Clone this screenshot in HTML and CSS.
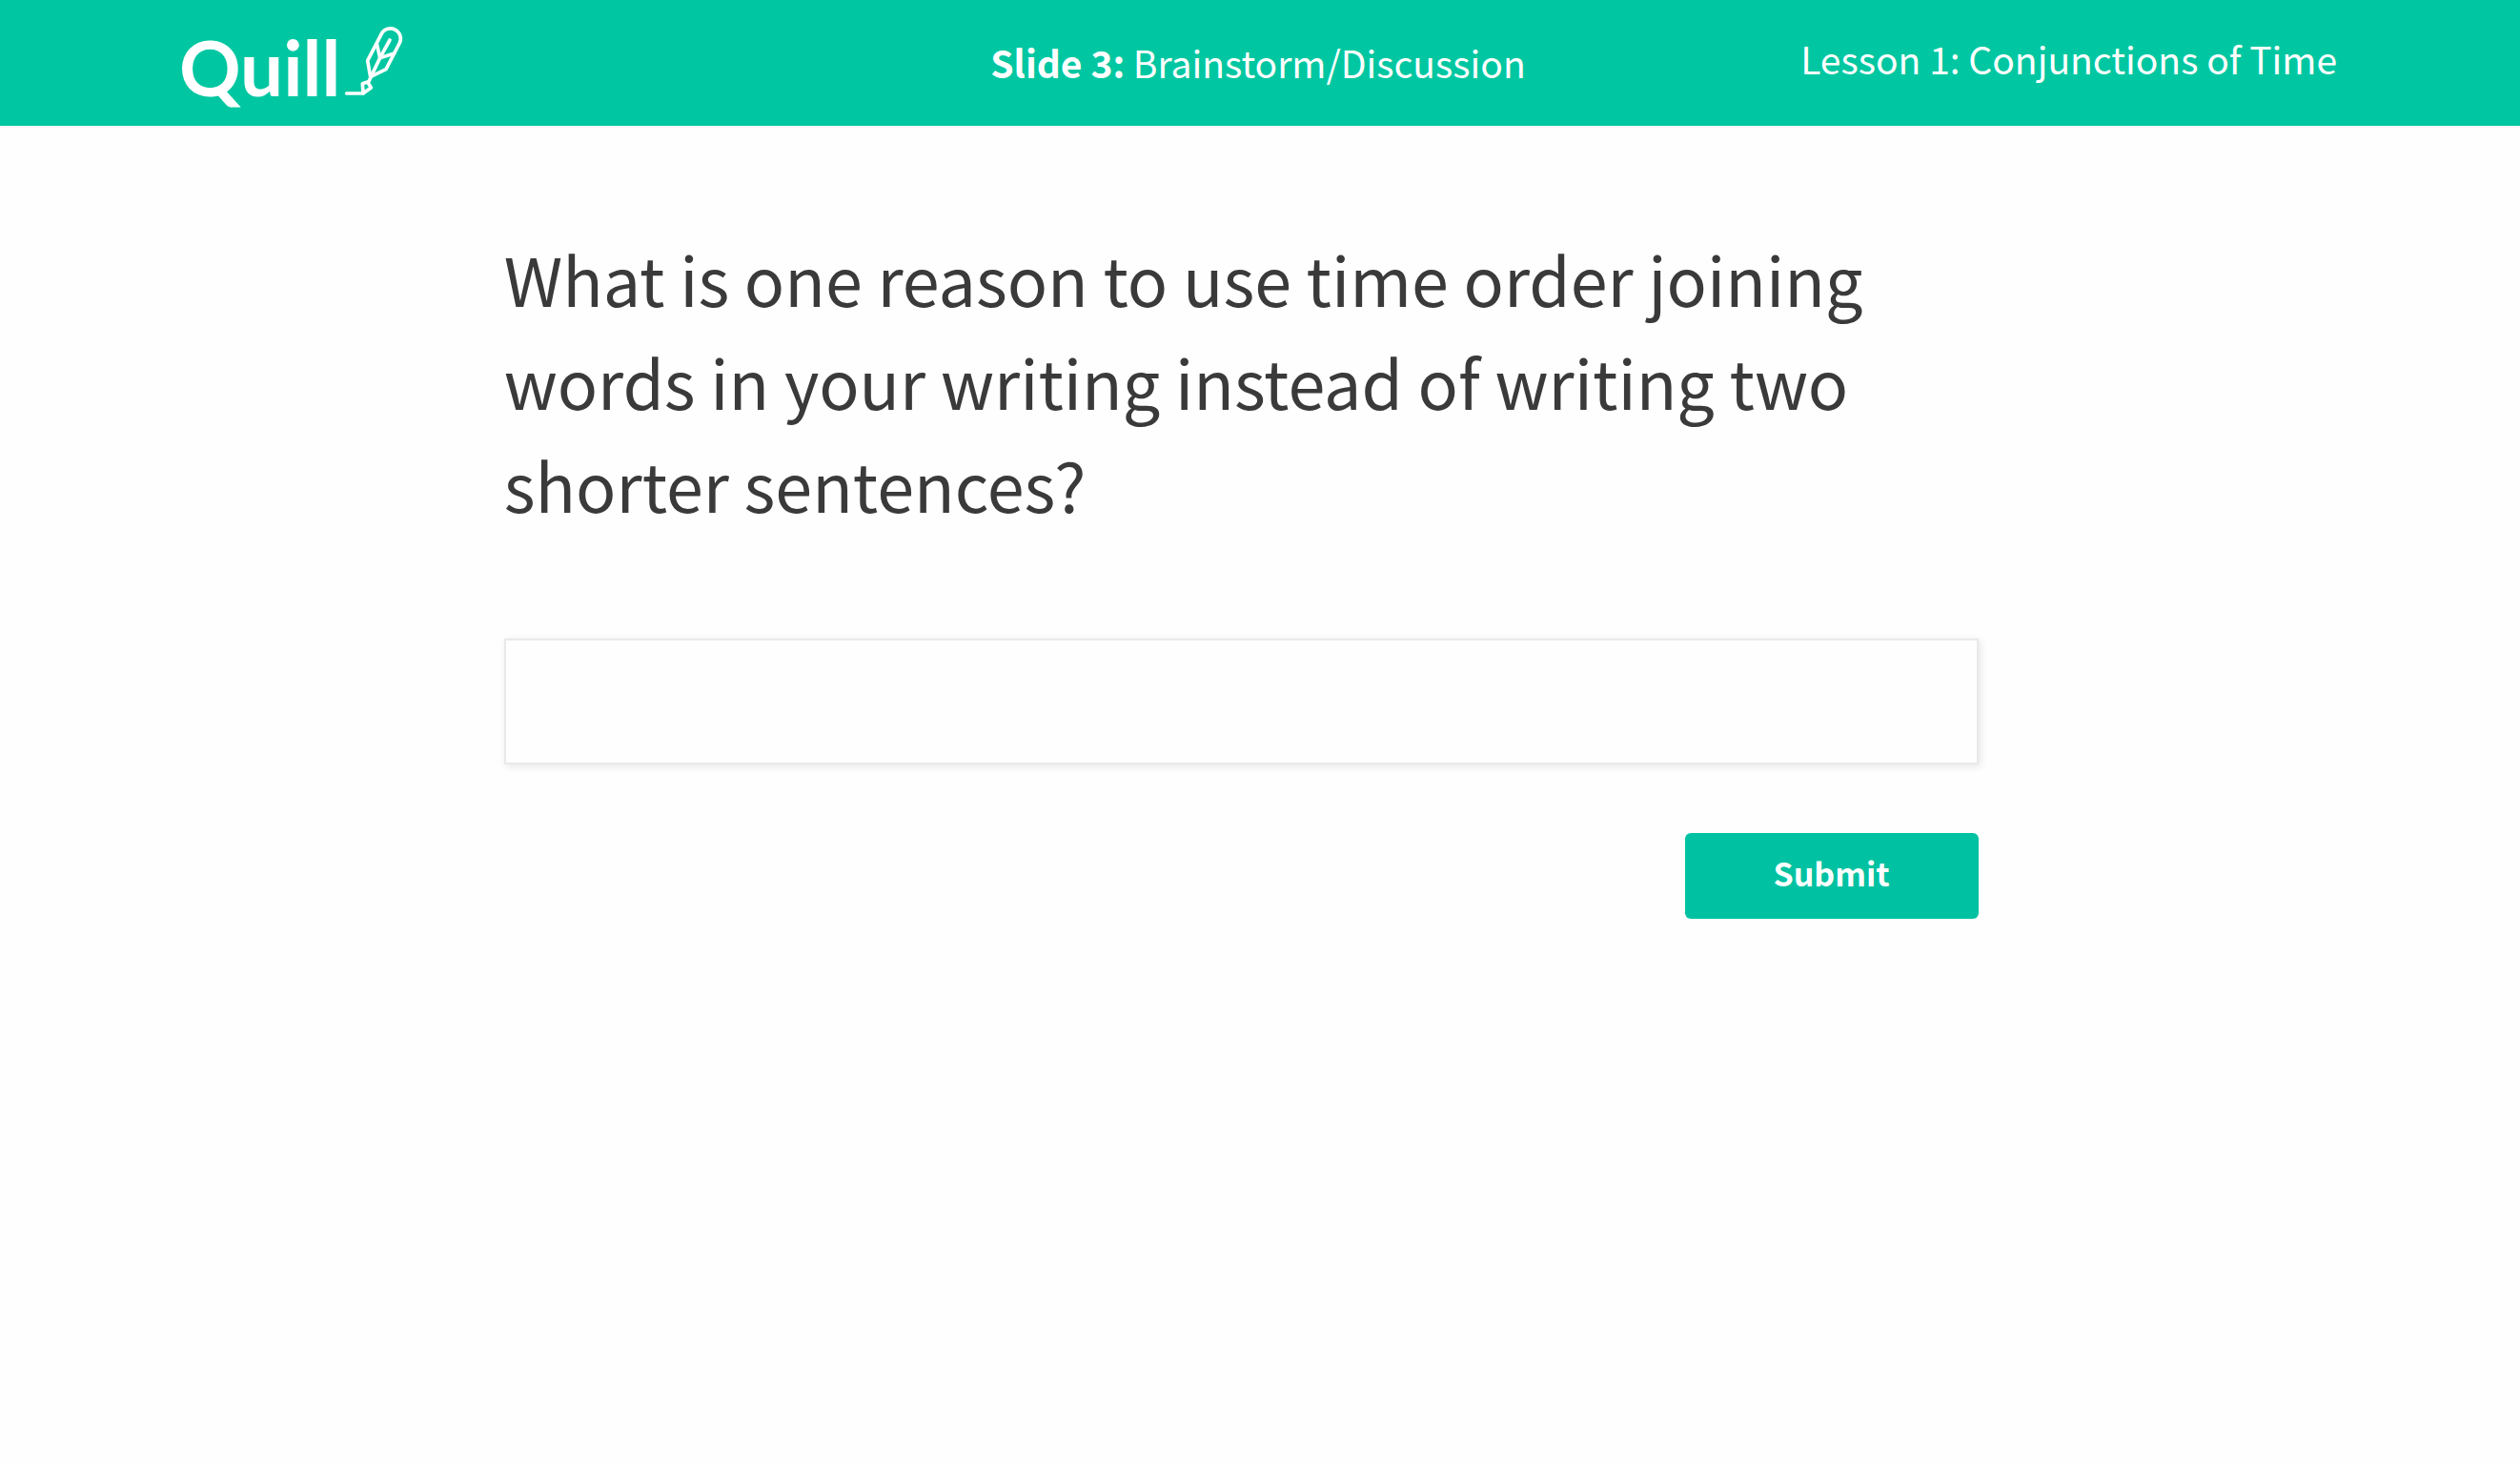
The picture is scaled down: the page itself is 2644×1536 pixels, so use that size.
FILE: index.html
```html
<!DOCTYPE html>
<html lang="en">
<head>
  <meta charset="utf-8">
  <meta name="viewport" content="width=device-width, initial-scale=1">
  <title>Quill – Lesson 1: Conjunctions of Time</title>
  <link rel="stylesheet" href="styles.css">
</head>
<body>
  <header class="topbar">
    <a class="logo" href="#">
      <span class="logo-word">Quill</span>
      <svg class="logo-feather" viewBox="0 0 225 255" aria-hidden="true">
        <path d="M92 131 L136 46 A32 32 0 0 1 193 75 L150 158 L101 182 Z"/>
        <path d="M162 66 L131 122 L96 196"/>
        <path d="M121 78 L131 122 L176 108"/>
        <path d="M92 198 L103 216 L78 234 L76 203 Z"/>
        <path d="M26 234 H78"/>
      </svg>
    </a>
    <p class="slide-title"><strong>Slide 3:</strong> Brainstorm/Discussion</p>
    <p class="lesson-title">Lesson 1: Conjunctions of Time</p>
  </header>
  <main class="slide">
    <form class="response">
      <label class="prompt" for="answer">What is one reason to use time order joining words in your writing instead of writing two shorter sentences?</label>
      <input class="answer" id="answer" type="text">
      <button class="submit" type="submit">Submit</button>
    </form>
  </main>
</body>
</html>
```
FILE: styles.css
```css
* {
  box-sizing: border-box;
}

body {
  margin: 0;
  background: #fefefe;
  color: #3a3a3a;
  font-family: "Noto Sans CJK SC", "Open Sans", sans-serif;
}

.topbar {
  display: grid;
  grid-template-columns: 1fr auto 1fr;
  align-items: start;
  height: 134px;
  padding: 0 192px 0 188px;
  background: #00c7a1;
  border-bottom: 2px solid #f7f7f7;
  color: #fff;
  font-size: 39px;
  line-height: 56px;
}

.topbar p {
  margin: 0;
}

.logo {
  display: flex;
  padding-top: 20px;
  color: #fff;
  text-decoration: none;
}

.logo-word {
  font-family: Lato, sans-serif;
  font-size: 80px;
  font-weight: 700;
  line-height: 100px;
}

.logo-feather {
  width: 75px;
  height: 85px;
  margin-left: -2px;
  fill: none;
  stroke: #fff;
  stroke-width: 11;
  stroke-linecap: round;
  stroke-linejoin: round;
}

.topbar .slide-title {
  padding-top: 37px;
}

.topbar .lesson-title {
  padding-top: 33px;
  text-align: right;
}

.slide {
  padding: 104px 21.5% 0 20%;
}

.response {
  display: flex;
  flex-direction: column;
}

.prompt {
  font-size: 70px;
  line-height: 108px;
}

.answer {
  width: 100%;
  height: 132px;
  margin: 108px 0 72px;
  padding: 0 32px;
  border: 2px solid #e9e9e9;
  background: #fefefe;
  box-shadow: 2px 2px 8px rgba(0, 0, 0, 0.1);
  color: inherit;
  font: inherit;
  font-size: 39px;
}

.submit {
  align-self: flex-end;
  width: 308px;
  height: 90px;
  padding: 0 0 6px;
  border: 0;
  border-radius: 6px;
  background: #00c2a2;
  color: #fff;
  font-family: inherit;
  font-size: 34px;
  font-weight: 700;
  line-height: 52px;
}
```
